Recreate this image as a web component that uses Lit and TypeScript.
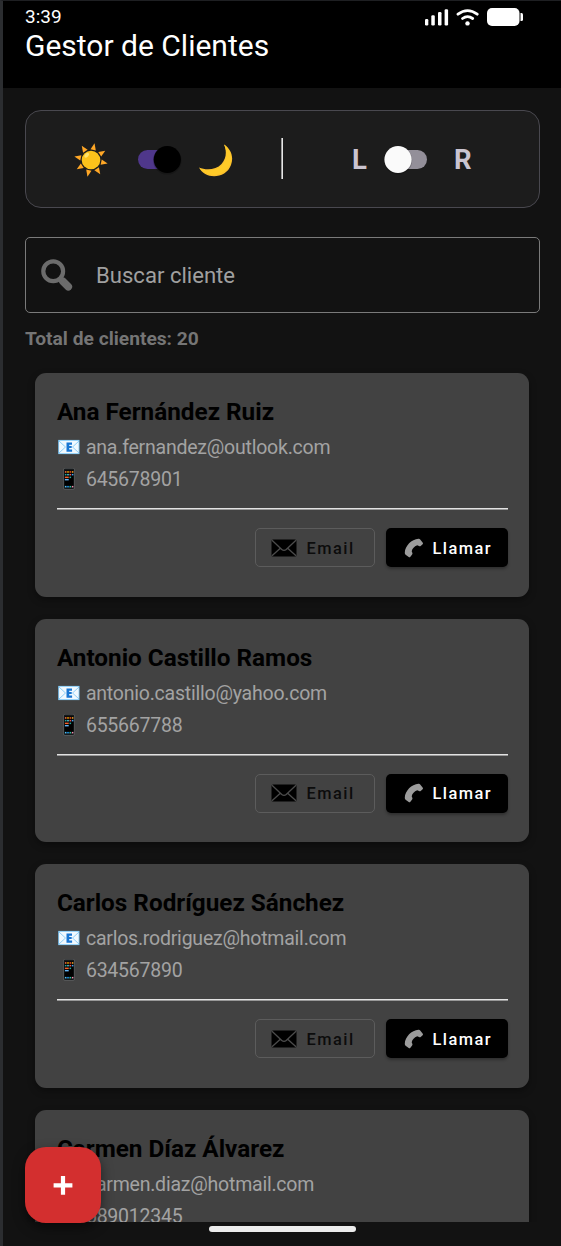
import { LitElement, html, css, svg } from "lit";
import { customElement, property } from "lit/decorators.js";

interface Client {
  name: string;
  email: string;
  phone: string;
}

const CLIENTS: Client[] = [
  { name: "Ana Fernández Ruiz", email: "ana.fernandez@outlook.com", phone: "645678901" },
  { name: "Antonio Castillo Ramos", email: "antonio.castillo@yahoo.com", phone: "655667788" },
  { name: "Carlos Rodríguez Sánchez", email: "carlos.rodriguez@hotmail.com", phone: "634567890" },
  { name: "Carmen Díaz Álvarez", email: "carmen.diaz@hotmail.com", phone: "689012345" },
];

@customElement("client-card")
export class ClientCard extends LitElement {
  @property({ attribute: false }) client!: Client;

  static styles = css`
    :host {
      display: block;
      box-sizing: border-box;
      height: 223.67px;
      flex: none;
      padding: 23px 21.5px 0;
      border-radius: 11px;
      background: #424242;
      box-shadow: 0 3px 7px rgba(0, 0, 0, 0.35);
    }
    .name {
      height: 35px;
      line-height: 32px;
      font-size: 24.3px;
      font-weight: 700;
      color: #000;
      white-space: nowrap;
    }
    .row {
      display: flex;
      align-items: center;
      height: 32px;
      font-size: 19.5px;
      letter-spacing: -0.22px;
      color: #a3a3a3;
      white-space: nowrap;
    }
    .row svg {
      width: 24px;
      height: 24px;
      margin-right: 5px;
      flex: none;
    }
    .row span {
      padding-top: 1px;
    }
    .rule {
      height: 2px;
      margin-top: 13px;
      background: linear-gradient(#e2e2e2 50%, #989898 50%);
    }
    .actions {
      display: flex;
      justify-content: flex-end;
      gap: 11px;
      margin-top: 18px;
    }
    .btn {
      display: flex;
      align-items: center;
      box-sizing: border-box;
      height: 39px;
      border-radius: 5px;
      font-size: 16.4px;
      font-weight: 500;
      letter-spacing: 1.5px;
      white-space: nowrap;
    }
    .btn span {
      padding-top: 1px;
    }
    .email {
      width: 119.5px;
      padding-left: 15px;
      border: 1px solid #5c5c5c;
      color: #0c0c0c;
    }
    .email svg {
      width: 26px;
      height: 18px;
      margin-right: 9px;
    }
    .call {
      width: 122px;
      padding-left: 18.5px;
      background: #000;
      color: #fff;
      box-shadow: 0 2px 3px rgba(0, 0, 0, 0.3);
    }
    .call svg {
      width: 20px;
      height: 20px;
      margin-right: 8px;
    }
  `;

  render() {
    return html`
      <div class="name">${this.client.name}</div>
      <div class="row">
        <svg viewBox="0 0 24 24">
          <rect x="1.2" y="4.9" width="21.3" height="14.2" fill="#81c8f5" />
          <rect x="2.1" y="5.8" width="19.5" height="12.4" fill="#f1f9fe" />
          <path d="M2 6l6.5 6L2 18M22 6l-6.5 6L22 18" fill="none" stroke="#81c8f5" stroke-width="0.9" />
          <path d="M9.5 7.6h5.5v2.2h-2.8v1.3h2.5v2h-2.5v1.5h2.9v2.2H9.5z" fill="#1976d2" />
        </svg>
        <span>${this.client.email}</span>
      </div>
      <div class="row">
        <svg viewBox="0 0 24 24">
          <rect x="6.4" y="1" width="11.2" height="21.5" rx="1.6" fill="#66696b" />
          <rect x="6.9" y="1.4" width="10.2" height="20.6" rx="1.3" fill="#15191b" />
          <rect x="7.6" y="3.4" width="8.8" height="16.6" fill="#000" />
          ${[0, 1, 2, 3].map(
            (c) => svg`
              <rect x=${7.9 + c * 2.3} y="4.2" width="1.6" height="1.5" fill=${["#ff7043", "#ffb300", "#f4511e", "#ffa726"][c]} />
              <rect x=${7.9 + c * 2.3} y="6.9" width="1.6" height="1.5" fill=${["#26a69a", "#4dd0e1", "#ef5350", "#42a5f5"][c]} />
              <rect x=${7.9 + c * 2.3} y="18.9" width="1.6" height="1.5" fill=${["#4fc3f7", "#2196f3", "#26c6a0", "#f48fb1"][c]} />
            `
          )}
          <path d="M7.9 9.6h3.8v1.5H7.9z" fill="#f4602c" />
          <path d="M12.5 9.6h1.6v1.5h-1.6z" fill="#26a69a" />
          <path d="M7.9 12h3.8v1.4H7.9z" fill="#64b5f6" />
        </svg>
        <span>${this.client.phone}</span>
      </div>
      <div class="rule"></div>
      <div class="actions">
        <div class="btn email">
          <svg viewBox="0 0 26 18">
            <rect x="0.5" y="0.5" width="25" height="17" rx="1.5" fill="#000" />
            <path d="M1 1.2l9.8 9.2q2.2 1.8 4.400 0L25 1.2M1 16.8l8.3-7.6M25 16.8l-8.3-7.6" fill="none" stroke="#4c4c4c" stroke-width="1.3" />
          </svg>
          <span>Email</span>
        </div>
        <div class="btn call">
          <svg viewBox="0 0 20 20">
            <path
              d="M.8 14.600C1 8 7.500 1.200 14.500.8c.8-.1 1.200.1 1.700.7l2.400 2.900c.5.600.5 1.300 0 1.800l-1.900 1.700c-.5.500-1.100.5-1.700.2l-1.800-.9c-2.900 1.100-5 3.300-5.500 6.100l.7 1.700c.2.600.1 1.100-.3 1.600l-1.700 2.200c-.5.600-1.100.7-1.700.3l-3.100-2.300c-.6-.5-.8-1-.8-2.200z"
              fill="#9c9c9c"
            />
          </svg>
          <span>Llamar</span>
        </div>
      </div>
    `;
  }
}

@customElement("app-root")
export class AppRoot extends LitElement {
  static styles = css`
    :host {
      display: block;
      position: relative;
      box-sizing: border-box;
      width: 561px;
      height: 1246px;
      overflow: hidden;
      border-left: 3px solid #2b2d30;
      border-top: 1px solid #1e1f22;
      background: #121212;
      font-family: Roboto, sans-serif;
    }
    .screen {
      display: flex;
      flex-direction: column;
      height: 1245px;
    }
    .header {
      height: 87px;
      flex: none;
      box-sizing: border-box;
      padding: 4px 37px 0 22px;
      background: #000;
      color: #fff;
    }
    .status {
      display: flex;
      align-items: center;
      justify-content: space-between;
      height: 24px;
    }
    .time {
      padding-bottom: 2px;
      font-size: 19px;
    }
    .status svg {
      width: 99px;
      height: 20px;
    }
    .title {
      height: 34px;
      line-height: 33px;
      font-size: 30px;
      white-space: nowrap;
    }
    .settings {
      display: flex;
      align-items: center;
      box-sizing: border-box;
      width: 515px;
      height: 98px;
      flex: none;
      margin: 22px 0 0 22px;
      padding-left: 47px;
      border: 1px solid #49484f;
      border-radius: 16px;
      background: #1c1c1c;
    }
    .sun,
    .moon {
      width: 36px;
      height: 36px;
      margin-top: 2px;
    }
    .switch {
      display: block;
      width: 48px;
      height: 36px;
      overflow: visible;
    }
    .dark {
      margin-left: 28px;
      margin-right: 12px;
    }
    .bar {
      width: 2px;
      height: 41px;
      margin: 0 69px 2px 48px;
      background: linear-gradient(90deg, #9a9a9a 50%, #e6e6e6 50%);
    }
    .side {
      font-size: 27.5px;
      font-weight: 700;
      color: #cac4d0;
    }
    .hand {
      margin-left: 13px;
      margin-right: 26px;
    }
    .search {
      display: flex;
      align-items: center;
      box-sizing: border-box;
      width: 515px;
      height: 76px;
      flex: none;
      margin: 29px 0 0 22px;
      padding-left: 14px;
      border: 1.4px solid #7a7a7a;
      border-radius: 5px;
      font-size: 22.1px;
      color: #a0a0a0;
    }
    .search svg {
      width: 34px;
      height: 34px;
      margin-right: 22px;
    }
    .total {
      height: 51px;
      line-height: 51px;
      flex: none;
      padding-left: 22px;
      font-size: 19.2px;
      font-weight: 700;
      color: #757575;
    }
    .list {
      display: flex;
      flex-direction: column;
      gap: 22px;
      width: 494px;
      height: 849px;
      flex: none;
      padding: 9px 32.4px 0;
      overflow: hidden;
    }
    .fab {
      position: absolute;
      left: 22px;
      bottom: 23px;
      width: 76px;
      height: 76px;
      border-radius: 21px;
      background: #d32f2f;
      box-shadow: 0 5px 12px rgba(0, 0, 0, 0.5);
    }
    .fab svg {
      display: block;
      width: 76px;
      height: 76px;
    }
    .home {
      width: 147px;
      height: 5.5px;
      margin: 4px 0 0 206px;
      border-radius: 3px;
      background: #ececec;
    }
  `;

  render() {
    return html`
      <div class="screen">
        <div class="header">
          <div class="status">
            <span class="time">3:39</span>
            <svg viewBox="0 0 99 20" fill="#fff">
              <rect x="0" y="12" width="3.3" height="6.5" rx="1.2" />
              <rect x="6.3" y="8.2" width="3.5" height="10.3" rx="1.2" />
              <rect x="13" y="5" width="3.5" height="13.5" rx="1.2" />
              <rect x="19.6" y="2.2" width="3.5" height="16.3" rx="1.2" />
              <g fill="none" stroke="#fff" stroke-width="2.8" stroke-linecap="round">
                <path d="M33 7.2Q42.5 0 52.2 7.2" />
                <path d="M37.5 11.5Q42.5 7.7 47.7 11.5" />
              </g>
              <circle cx="42.5" cy="16.4" r="2.2" />
              <rect x="62" y="1" width="32.5" height="18" rx="5" />
              <path d="M95.5 6h1q1.5 0 1.5 1.5v5q0 1.5-1.5 1.5h-1z" />
            </svg>
          </div>
          <div class="title">Gestor de Clientes</div>
        </div>

        <div class="settings">
          <svg class="sun" viewBox="0 0 36 36">
            ${[12, 57, 102, 147, 192, 237, 282, 327].map(
              (a) => svg`<path d="M18 1L15.3 7.6H20.7Z" fill="#ffa726" transform="rotate(${a} 18 18)" />`
            )}
            <circle cx="18" cy="18" r="9.3" fill="#fcc21b" />
            <ellipse cx="13.7" cy="13.3" rx="2.9" ry="1.7" fill="#ffe36c" transform="rotate(-45 13.7 13.3)" />
          </svg>
          <svg class="switch dark" viewBox="0 0 48 36">
            <rect x="1" y="9" width="42" height="19" rx="9.5" fill="#4f378b" />
            <circle cx="30.3" cy="19.3" r="14.3" fill="#000" opacity="0.2" />
            <circle cx="30.3" cy="18.5" r="13.6" fill="#000" />
          </svg>
          <svg class="moon" viewBox="0 0 36 36">
            <path d="M27 2.5C34 7 37 15 34 23C29 37 8 38 2 25.5C9 28.5 19 28 24.5 22C30 16 29.5 8 27 2.5Z" fill="#fbc02d" />
            <path d="M27 2.5C33 7 36 15 33 22.5C28 34.5 11 36.5 3 26.5C10 29.5 20 29 25.5 22.5C31 16.5 30 8 27 2.5Z" fill="#ffca28" />
          </svg>
          <div class="bar"></div>
          <span class="side">L</span>
          <svg class="switch hand" viewBox="0 0 48 36">
            <rect x="5" y="9" width="42" height="19" rx="9.5" fill="#938f99" />
            <circle cx="18" cy="19.3" r="14.2" fill="#000" opacity="0.2" />
            <circle cx="18" cy="18.5" r="13.6" fill="#fafafa" />
          </svg>
          <span class="side">R</span>
        </div>

        <div class="search">
          <svg viewBox="0 0 34 34">
            <path d="M22.8 23.2L28.3 28.7" stroke="#6c6c6c" stroke-width="7.6" stroke-linecap="round" />
            <path d="M19 19.5L24 24.5" stroke="#6c6c6c" stroke-width="4" />
            <circle cx="13.2" cy="13.2" r="9.9" fill="none" stroke="#6c6c6c" stroke-width="4.2" />
          </svg>
          <span>Buscar cliente</span>
        </div>
        <div class="total">Total de clientes: 20</div>

        <div class="list">
          ${CLIENTS.map((c) => html`<client-card .client=${c}></client-card>`)}
        </div>
        <div class="home"></div>
      </div>

      <div class="fab">
        <svg viewBox="0 0 76 76">
          <path d="M38 31V45.6M30.7 38.3H45.3" stroke="#fff" stroke-width="4.2" stroke-linecap="square" />
        </svg>
      </div>
    `;
  }
}
